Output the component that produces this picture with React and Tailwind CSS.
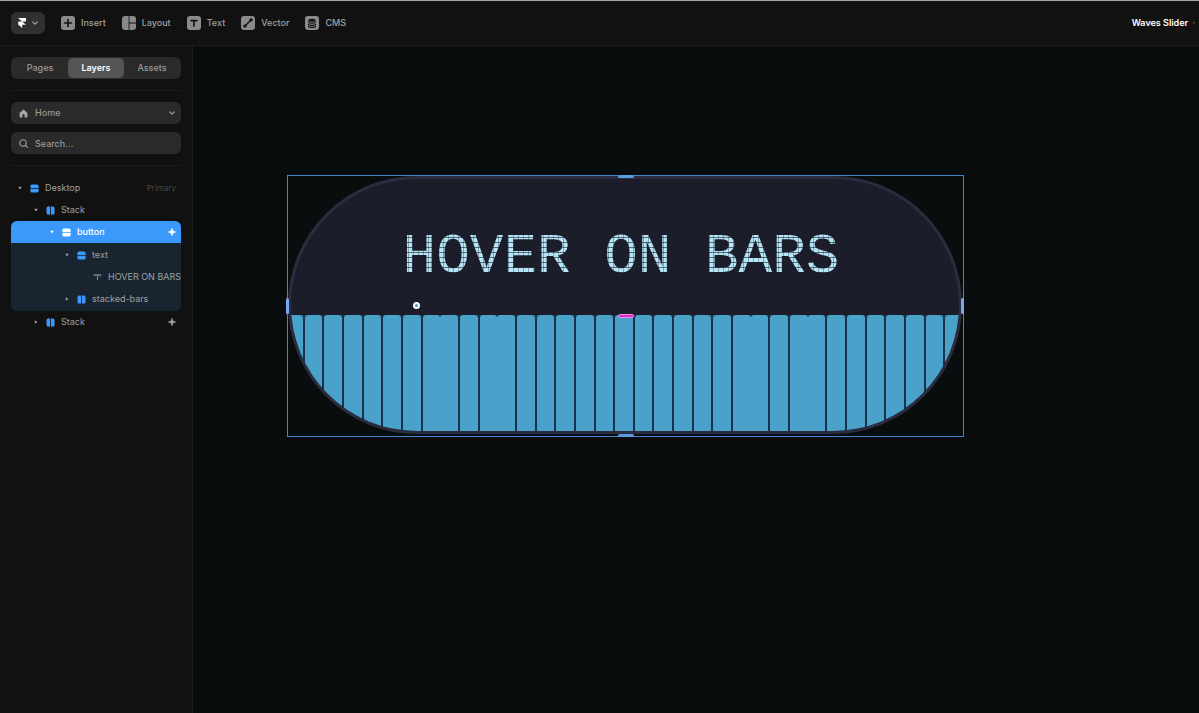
import { useState } from 'react';
import clsx from 'clsx';

const InsertIcon = () => (
  <svg className="size-3.5" viewBox="0 0 14 14">
    <rect width="14" height="14" rx="3" fill="#8a8a8a" />
    <path d="M7 3.6v6.8M3.6 7h6.8" stroke="#121212" strokeWidth="1.6" strokeLinecap="round" />
  </svg>
);

const LayoutIcon = () => (
  <svg className="size-3.5" viewBox="0 0 14 14" fill="#8a8a8a">
    <path d="M3 0h3.6v14H3a3 3 0 0 1-3-3V3a3 3 0 0 1 3-3Z" />
    <path d="M7.4 0H11a3 3 0 0 1 3 3v3.6H7.4Z" />
    <path d="M7.4 7.4H14V11a3 3 0 0 1-3 3H7.4Z" />
  </svg>
);

const TextIcon = () => (
  <svg className="size-3.5" viewBox="0 0 14 14">
    <rect width="14" height="14" rx="3" fill="#8a8a8a" />
    <path d="M4 4.6h6M7 4.6v5.6" stroke="#121212" strokeWidth="1.6" strokeLinecap="round" />
  </svg>
);

const VectorIcon = () => (
  <svg className="size-3.5" viewBox="0 0 14 14">
    <rect width="14" height="14" rx="3" fill="#8a8a8a" />
    <path d="M4 10l6-6" stroke="#121212" strokeWidth="1.4" />
    <circle cx="3.9" cy="10.1" r="1.7" fill="#121212" />
    <circle cx="10.1" cy="3.9" r="1.7" fill="#121212" />
  </svg>
);

const CmsIcon = () => (
  <svg className="size-3.5" viewBox="0 0 14 14">
    <rect width="14" height="14" rx="3" fill="#8a8a8a" />
    <ellipse cx="7" cy="4.2" rx="3.6" ry="1.5" fill="#121212" />
    <path
      d="M3.4 5.8c0 2 7.2 2 7.2 0M3.4 7.9c0 2 7.2 2 7.2 0M3.4 9.9c0 2 7.2 2 7.2 0"
      fill="none"
      stroke="#121212"
      strokeWidth="1.1"
    />
  </svg>
);

const Chevron = ({ className }) => (
  <svg className={className} viewBox="0 0 6 6" fill="none" stroke="currentColor" strokeWidth="1.2" strokeLinecap="round" strokeLinejoin="round">
    <path d="M0.8 2l2.2 2.2L5.2 2" />
  </svg>
);

const StackIcon = ({ vertical }) => (
  <svg className="size-[9px] shrink-0" viewBox="0 0 9 9" fill="currentColor">
    {vertical ? (
      <>
        <path d="M2 0.5h5a1.6 1.6 0 0 1 1.6 1.6v2H0.4v-2A1.6 1.6 0 0 1 2 0.5Z" />
        <path d="M0.4 4.7h8.2v2.2A1.6 1.6 0 0 1 7 8.5H2A1.6 1.6 0 0 1 0.4 6.9Z" />
      </>
    ) : (
      <>
        <path d="M2 0.4h2.1v8.2H2A1.5 1.5 0 0 1 0.5 7V2A1.6 1.6 0 0 1 2 0.4Z" />
        <path d="M4.9 0.4H7A1.6 1.6 0 0 1 8.5 2v5A1.6 1.6 0 0 1 7 8.6H4.9Z" />
      </>
    )}
  </svg>
);

const TypeIcon = () => (
  <svg className="size-[9px] shrink-0" viewBox="0 0 9 9" fill="none" stroke="#7d8892" strokeWidth="1.1">
    <path d="M1.4 3.2V1.9h6.2v1.3M4.5 1.9v5.4" />
  </svg>
);

const Sparkle = () => (
  <svg className="size-2 shrink-0" viewBox="0 0 8 8" fill="currentColor">
    <path d="M4 0l1.1 2.9L8 4l-2.9 1.1L4 8l-1.1-2.9L0 4l2.9-1.1Z" stroke="currentColor" strokeWidth="0.4" />
  </svg>
);

const Arrow = ({ open }) => (
  <svg className="size-1 shrink-0" viewBox="0 0 4 4" fill="currentColor">
    {open ? <path d="M0.2 0.8h3.6L2 3.4Z" /> : <path d="M0.8 0.2v3.6L3.4 2Z" />}
  </svg>
);

const tools = [
  { label: 'Insert', Icon: InsertIcon },
  { label: 'Layout', Icon: LayoutIcon },
  { label: 'Text', Icon: TextIcon },
  { label: 'Vector', Icon: VectorIcon },
  { label: 'CMS', Icon: CmsIcon },
];

const indents = ['pl-[7px]', 'pl-[23px]', 'pl-[39px]', 'pl-[54px]', 'pl-[70px]'];

const LayerRow = ({ depth, label, kind, open, selected, hint, sparkle }) => (
  <button
    type="button"
    className={clsx(
      'flex h-[22px] w-full items-center pr-[5px] text-left whitespace-nowrap',
      indents[depth],
      selected ? 'bg-[#3b99fc] font-medium text-white' : 'text-[#a0a0a0]'
    )}
  >
    {kind === 'type' ? <span className="w-1 shrink-0" /> : <Arrow open={open} />}
    <span className={clsx('mr-1.5 ml-2', selected ? 'text-white' : 'text-[#3b99fc]')}>
      {kind === 'type' ? <TypeIcon /> : <StackIcon vertical={kind === 'vertical'} />}
    </span>
    <span className="flex-1">{label}</span>
    {hint && <span className="text-[8px] text-[#484848]">{hint}</span>}
    {sparkle && <Sparkle />}
  </button>
);

const Header = () => (
  <header className="flex h-[46px] items-center gap-4 border-t border-b border-t-[#a3a8a6] border-b-[#1b1d1c] bg-[#111111] pr-1 pl-[11px]">
    <button
      type="button"
      aria-label="Menu"
      className="flex h-[22px] w-[34px] items-center justify-center gap-1.5 rounded-md bg-[#303030] text-[#a0a0a0]"
    >
      <svg className="h-2.5 w-2" viewBox="0 0 8 10" fill="#ffffff">
        <path d="M0 0h8v3.4H4.2L8 6.8H4.2V10L0.2 6.6V3.4h3.9Z" />
      </svg>
      <Chevron className="size-1.5" />
    </button>
    {tools.map(({ label, Icon }) => (
      <button key={label} type="button" className="flex items-center gap-1.5 font-medium text-[#a0a0a0]">
        <Icon />
        {label}
      </button>
    ))}
    <p className="ml-auto flex gap-1 font-semibold text-white">
      Waves Slider <span className="text-[#777777]">·</span>
    </p>
  </header>
);

const Sidebar = () => {
  const [tab, setTab] = useState('Layers');

  return (
    <aside className="w-[193px] shrink-0 border-r border-[#1a1e1d] bg-[#111111] px-[11px] pt-[11px]">
      <div role="tablist" className="grid h-[22px] grid-cols-3 rounded-md bg-[#2a2a2a] p-px">
        {['Pages', 'Layers', 'Assets'].map((name) => (
          <button
            key={name}
            type="button"
            role="tab"
            aria-selected={tab === name}
            onClick={() => setTab(name)}
            className={clsx(
              'rounded-[5px]',
              tab === name ? 'bg-[#555555] font-semibold text-white' : 'font-medium text-[#999999]'
            )}
          >
            {name}
          </button>
        ))}
      </div>

      <hr className="my-[11px] border-[#1e1e1e]" />

      {/* Page picker and layer search */}
      <div className="grid gap-2">
        <label className="relative flex h-[22px] items-center rounded-md bg-[#2a2a2a] text-[#999999]">
          <svg className="pointer-events-none absolute left-2 size-[9px]" viewBox="0 0 9 9" fill="#a8a8a8">
            <path d="M4.5 0.4L8.4 4v3.4a1 1 0 0 1-1 1H5.6V6.2a1.1 1.1 0 0 0-2.2 0v2.2H1.6a1 1 0 0 1-1-1V4Z" />
          </svg>
          <select aria-label="Page" className="h-full w-full appearance-none bg-transparent pl-6 font-medium outline-none">
            <option>Home</option>
          </select>
          <Chevron className="pointer-events-none absolute right-1.5 size-1.5" />
        </label>
        <label className="relative flex h-[22px] items-center rounded-md bg-[#2a2a2a] text-[#999999]">
          <svg
            className="pointer-events-none absolute left-2 size-[9px]"
            viewBox="0 0 9 9"
            fill="none"
            stroke="#a0a0a0"
            strokeWidth="1.1"
            strokeLinecap="round"
          >
            <circle cx="4" cy="4" r="3.2" />
            <path d="M6.4 6.4l2 2" />
          </svg>
          <input
            type="text"
            aria-label="Search layers"
            placeholder="Search…"
            className="h-full w-full bg-transparent pl-6 font-medium outline-none placeholder:text-[#999999]"
          />
        </label>
      </div>

      <hr className="my-[11px] border-[#1e1e1e]" />

      <nav aria-label="Layers">
        <LayerRow depth={0} label="Desktop" kind="vertical" open hint="Primary" />
        <LayerRow depth={1} label="Stack" kind="horizontal" open />
        <div className="overflow-hidden rounded-md bg-[#182430]">
          <LayerRow depth={2} label="button" kind="vertical" open selected sparkle />
          <div className="py-px">
            <LayerRow depth={3} label="text" kind="vertical" open />
            <LayerRow depth={4} label="HOVER ON BARS" kind="type" />
            <LayerRow depth={3} label="stacked-bars" kind="horizontal" />
          </div>
        </div>
        <LayerRow depth={1} label="Stack" kind="horizontal" sparkle />
      </nav>
    </aside>
  );
};

// bars that touch the next one, with no gap between them
const joined = [7, 10, 23, 26];

const WavesButton = () => (
  <div className="relative w-[677px] border border-[#4385c8] pr-px pb-0.5">
    <div className="flex h-[258px] flex-col overflow-hidden rounded-full border-[3px] border-[#2b2c3f] bg-[#1c1d2a]">
      <div className="flex flex-1 items-center justify-center pt-5 pr-2">
        <p className="bg-[#b5e6f7] bg-[linear-gradient(to_right,#1c1d2a55_1px,transparent_1px),linear-gradient(to_bottom,#1c1d2a99_1px,transparent_1px)] bg-[size:5px_5px] bg-clip-text font-['Liberation_Mono',monospace] text-[56px] leading-[60px] whitespace-nowrap text-transparent">
          HOVER ON BARS
        </p>
      </div>
      <div className="-mx-1.5 flex h-[116px]">
        {Array.from({ length: 35 }, (_, i) => (
          <div key={i} className={clsx('flex-1 bg-[#1b3148]', !joined.includes(i) && 'pr-[2px]')}>
            <div className="h-full rounded-t-[3px] bg-[#4aa2ca]" />
          </div>
        ))}
      </div>
    </div>

    {/* Selection handles */}
    <span className="absolute -top-px left-1/2 h-[3px] w-4 -translate-x-1/2 rounded-sm bg-[#5a9be0]" />
    <span className="absolute -bottom-px left-1/2 h-[3px] w-4 -translate-x-1/2 rounded-sm bg-[#5a9be0]" />
    <span className="absolute top-1/2 -left-0.5 h-4 w-[3px] -translate-y-1/2 rounded-sm bg-[#74a9f0]" />
    <span className="absolute top-1/2 -right-px h-4 w-[3px] -translate-y-1/2 rounded-sm bg-[#74a9f0]" />
    <span className="absolute top-[138px] left-1/2 h-1 w-4 -translate-x-1/2 rounded-sm border border-[#f08be4] bg-[#d92fc6]" />
    <span className="absolute top-[126px] left-[125px] size-[7px] rounded-full border-2 border-white bg-[#5a8fc8]" />
  </div>
);

const App = () => {
  return (
    <div className="flex min-h-screen flex-col overflow-hidden bg-[#090d0d] font-['Inter',sans-serif] text-[9px] leading-3">
      <Header />
      <div className="flex flex-1">
        <Sidebar />
        <main className="flex-1 overflow-hidden pt-[129px] pl-[94px]">
          <WavesButton />
        </main>
      </div>
    </div>
  );
};

export default App;
